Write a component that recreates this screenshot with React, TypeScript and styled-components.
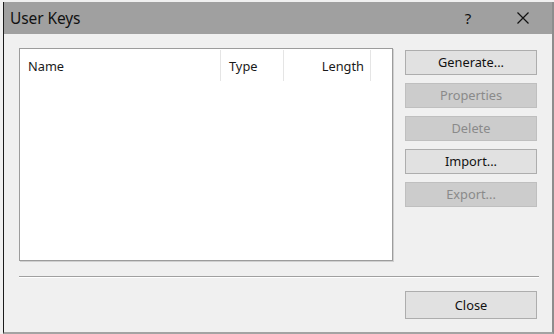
import React from 'react'
import styled, { createGlobalStyle } from 'styled-components'

const GlobalStyle = createGlobalStyle`
  html, body {
    margin: 0;
    padding: 0;
    background: #f0f0f0;
    font-family: 'Noto Sans', 'Liberation Sans', sans-serif;
  }
`

const Window = styled.div`
  margin: 2px 0 0 3px;
  width: 548px;
  height: 330px;
  display: flex;
  flex-direction: column;
  background: #f0f0f0;
  border-left: 1px solid #1c1c1c;
  border-right: 2px solid #8d8d8d;
  border-bottom: 2px solid #a3a3a3;
`

const TitleBar = styled.div`
  height: 32px;
  display: flex;
  align-items: center;
  background: #a0a0a0;
  padding-left: 6px;
`

const TitleText = styled.div`
  flex: 1;
  font-size: 15.5px;
  color: #111;
  letter-spacing: -0.1px;
  padding-bottom: 1px;
`

const HelpGlyph = styled.div`
  width: 20px;
  font-size: 15px;
  color: #111;
  text-align: center;
  margin-right: 38px;
`

const CloseGlyph = styled.div`
  width: 14px;
  height: 14px;
  margin-right: 22px;
  display: flex;
`

const Body = styled.div`
  flex: 1;
  display: flex;
  flex-direction: column;
  padding: 14px 12px 0 15px;
`

const MainRow = styled.div`
  display: flex;
  gap: 12px;
`

const ListBox = styled.div`
  width: 372px;
  height: 211px;
  background: #fff;
  border: 1px solid #9c9c9c;
  box-shadow: 1px 1px 0 #d0d0d0;
`

const HeaderRow = styled.div`
  display: flex;
  height: 33px;
  font-size: 12.8px;
  color: #1a1a1a;
`

const HeaderCell = styled.div<{ $w: number; $right?: boolean }>`
  width: ${(p) => p.$w}px;
  display: flex;
  align-items: center;
  justify-content: ${(p) => (p.$right ? 'flex-end' : 'flex-start')};
  padding: 1px ${(p) => (p.$right ? 6 : 0)}px 0 ${(p) => (p.$right ? 0 : 8)}px;
  box-sizing: border-box;
  border-right: 1px solid #e5e5e5;
  margin: 1px 0;
`

const ButtonColumn = styled.div`
  display: flex;
  flex-direction: column;
  gap: 8px;
  margin-top: 2px;
`

const DialogButton = styled.button<{ $h?: number }>`
  width: 132px;
  height: ${(p) => p.$h ?? 25}px;
  box-sizing: border-box;
  padding: 0 0 1px;
  font-family: 'Noto Sans', 'Liberation Sans', sans-serif;
  font-size: 12.8px;
  color: #111;
  background: #e1e1e1;
  border: 1px solid #adadad;
  border-radius: 0;

  &:disabled {
    color: #8a8a8a;
    background: #cccccc;
    border-color: #bfbfbf;
  }
`

const Separator = styled.div`
  width: 520px;
  height: 1px;
  margin-top: 15px;
  background: #a0a0a0;
  border-bottom: 1px solid #fff;
`

const Footer = styled.div`
  display: flex;
  justify-content: flex-end;
  width: 518px;
  margin-top: 13px;
`

export default function App(): React.ReactElement {
  return (
    <>
      <GlobalStyle />
      <Window>
        <TitleBar>
          <TitleText>User Keys</TitleText>
          <HelpGlyph>?</HelpGlyph>
          <CloseGlyph>
            <svg width="14" height="14" viewBox="0 0 14 14">
              <path d="M1.5 1.5 L12.5 12.5 M12.5 1.5 L1.5 12.5" stroke="#111" strokeWidth="1.2" />
            </svg>
          </CloseGlyph>
        </TitleBar>
        <Body>
          <MainRow>
            <ListBox>
              <HeaderRow>
                <HeaderCell $w={201}>Name</HeaderCell>
                <HeaderCell $w={63}>Type</HeaderCell>
                <HeaderCell $w={87} $right>
                  Length
                </HeaderCell>
              </HeaderRow>
            </ListBox>
            <ButtonColumn>
              <DialogButton>Generate...</DialogButton>
              <DialogButton disabled>Properties</DialogButton>
              <DialogButton disabled>Delete</DialogButton>
              <DialogButton>Import...</DialogButton>
              <DialogButton disabled>Export...</DialogButton>
            </ButtonColumn>
          </MainRow>
          <Separator />
          <Footer>
            <DialogButton $h={28}>Close</DialogButton>
          </Footer>
        </Body>
      </Window>
    </>
  )
}
